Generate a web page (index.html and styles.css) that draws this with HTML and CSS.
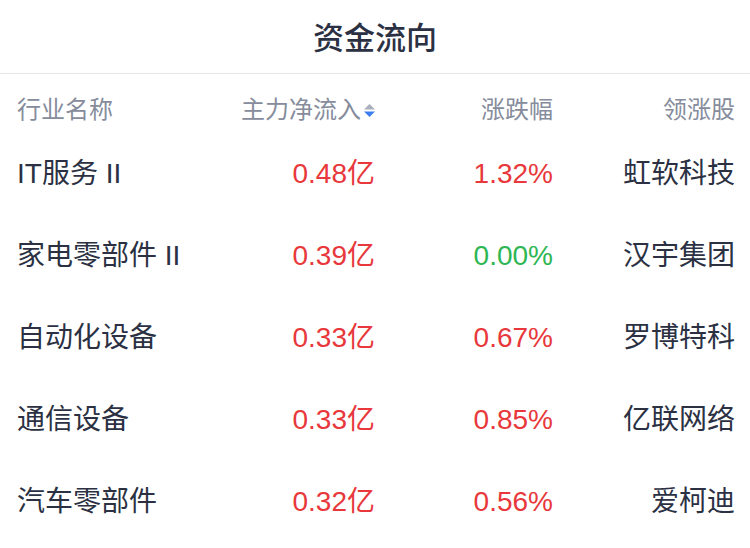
FILE: index.html
```html
<!DOCTYPE html>
<html lang="zh-CN">
<head>
<meta charset="utf-8">
<title>资金流向</title>
<link rel="stylesheet" href="styles.css">
</head>
<body>
<div class="panel">
  <div class="title">资金流向</div>
  <div class="table">
    <div class="row head">
      <div class="c1">行业名称</div>
      <div class="c2">主力净流入<span class="sort"><svg width="13" height="17" viewBox="0 0 13 17"><path d="M6.5 2 L12 7.5 L1 7.5 Z" fill="#a9afbd"/><path d="M1 9.5 L12 9.5 L6.5 15 Z" fill="#3d7ff0"/></svg></span></div>
      <div class="c3">涨跌幅</div>
      <div class="c4">领涨股</div>
    </div>
    <div class="row">
      <div class="c1">IT服务 II</div>
      <div class="c2 up">0.48亿</div>
      <div class="c3 up">1.32%</div>
      <div class="c4">虹软科技</div>
    </div>
    <div class="row">
      <div class="c1">家电零部件 II</div>
      <div class="c2 up">0.39亿</div>
      <div class="c3 flat">0.00%</div>
      <div class="c4">汉宇集团</div>
    </div>
    <div class="row">
      <div class="c1">自动化设备</div>
      <div class="c2 up">0.33亿</div>
      <div class="c3 up">0.67%</div>
      <div class="c4">罗博特科</div>
    </div>
    <div class="row">
      <div class="c1">通信设备</div>
      <div class="c2 up">0.33亿</div>
      <div class="c3 up">0.85%</div>
      <div class="c4">亿联网络</div>
    </div>
    <div class="row">
      <div class="c1">汽车零部件</div>
      <div class="c2 up">0.32亿</div>
      <div class="c3 up">0.56%</div>
      <div class="c4">爱柯迪</div>
    </div>
  </div>
</div>
</body>
</html>
```
FILE: styles.css
```css
html, body {
  margin: 0;
  padding: 0;
  background: #ffffff;
}
body {
  font-family: "Liberation Sans", "Noto Sans CJK SC", sans-serif;
  color: #2b3143;
}
.panel {
  width: 750px;
}
.title {
  height: 73px;
  line-height: 72px;
  text-align: center;
  font-size: 31px;
  font-weight: 500;
  font-family: "Noto Sans CJK SC", sans-serif;
  border-bottom: 1px solid #e6e6e6;
}
.table {
  padding: 0 15px 0 17px;
}
.row {
  display: grid;
  grid-template-columns: 178px 180px 178px 182px;
  height: 82px;
  line-height: 82px;
  font-size: 28px;
}
.row.head {
  height: 59px;
  line-height: 24px;
  padding-top: 24px;
  padding-bottom: 11px;
  box-sizing: border-box;
  font-size: 24px;
  color: #868c9c;
}
.c1 {
  text-align: left;
  white-space: nowrap;
}
.c2, .c3, .c4 {
  text-align: right;
  white-space: nowrap;
}
.head .c2 {
  display: flex;
  justify-content: flex-end;
  align-items: center;
}
.sort {
  display: inline-flex;
  margin-left: 2px;
  margin-right: -1px;
}
.up {
  color: #e8383b;
}
.flat {
  color: #2db653;
}
```
